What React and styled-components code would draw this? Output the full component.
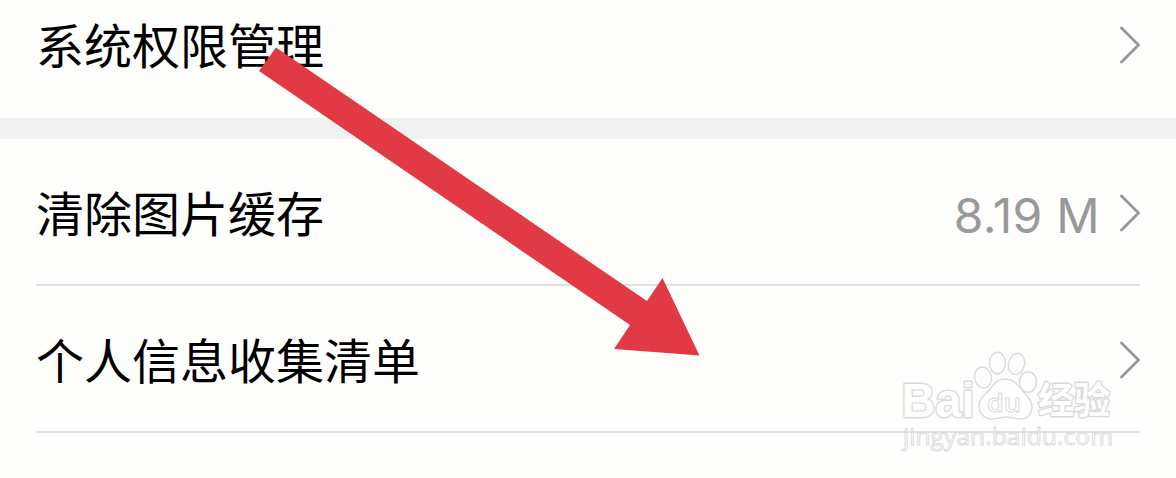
import React from 'react'
import styled, { createGlobalStyle } from 'styled-components'

const GlobalStyle = createGlobalStyle`
  body {
    margin: 0;
    background-color: #fefefd;
    overflow: hidden;
  }
`

const Page = styled.main`
  position: relative;
  width: 1176px;
  height: 478px;
  overflow: hidden;
  background-color: #fefefd;
  font-family: 'Noto Sans CJK SC', sans-serif;
`

const Group = styled.section`
  display: flex;
  flex-direction: column;
  padding: 0 36px;
`

const Divider = styled.div`
  height: 21px;
  background-color: #f1f1f1;
`

const Row = styled.div`
  display: flex;
  align-items: center;
  box-sizing: border-box;
  height: ${props => props.height || '147px'};
  padding-bottom: ${props => props.bottom || '0'};
  border-bottom: ${props => (props.line ? '2px solid #e1e1e1' : 'none')};
`

const Label = styled.span`
  flex: 1;
  padding-bottom: 1px;
  font-size: 48px;
  line-height: 60px;
  color: #000;
`

const Value = styled.span`
  margin-right: 18px;
  padding-top: 8px;
  font-family: Inter, sans-serif;
  font-size: 48px;
  line-height: 60px;
  letter-spacing: 0.3px;
  color: #999;
`

const ChevronIcon = styled.svg`
  width: 22px;
  height: 40px;
  margin-top: 2px;
  fill: none;
  stroke: #999;
  stroke-width: 2.8;
  stroke-linecap: round;
`

const Arrow = styled.svg`
  position: absolute;
  top: 0;
  left: 0;
  fill: #e23a45;
`

const Mark = styled.svg`
  position: absolute;
  left: 890px;
  top: 340px;
  fill: #fefefd;
  stroke: #dadada;
  stroke-width: 1.4;
  stroke-linejoin: round;
`

const MarkName = styled.text`
  font-family: 'Liberation Sans', 'Noto Sans CJK SC', sans-serif;
  font-weight: bold;
  paint-order: stroke;
  stroke-width: 2.8;
`

const MarkText = styled.text`
  font-family: 'Open Sans', sans-serif;
  fill: #fefefd;
  fill-opacity: 0.6;
  stroke-width: 0.9;
`

function Chevron () {
  return (
    <ChevronIcon viewBox='0 0 22 40'>
      <path d='M3.5 3 L20.5 20 L3.5 37' />
    </ChevronIcon>
  )
}

function Watermark () {
  return (
    <Mark width='240' height='130' viewBox='0 0 240 130'>
      <MarkName x='11.5' y='77' fontSize='49' textLength='73' lengthAdjust='spacingAndGlyphs'>Bai</MarkName>
      <ellipse cx='93' cy='37.5' rx='8.5' ry='10.5' transform='rotate(-10 93 37.5)' />
      <ellipse cx='107.5' cy='23' rx='8' ry='10.7' />
      <ellipse cx='126.5' cy='24' rx='8' ry='10.7' transform='rotate(12 126.5 24)' />
      <ellipse cx='138' cy='42' rx='8.5' ry='10.3' />
      <path d='M115 39 C107 39 104 44 100 49 C95 55 89 58 89 66 C89 74 95 79 102 79 C108 79 111 77 116 77 C121 77 125 79 131 79 C138 79 142 73 142 67 C142 60 137 56 132 50 C127 44 123 39 115 39 Z' />
      <MarkText x='97' y='72' fontSize='26' fontWeight='600' textLength='34' lengthAdjust='spacingAndGlyphs'>du</MarkText>
      <MarkName x='148' y='74' fontSize='37' textLength='72' lengthAdjust='spacingAndGlyphs'>经验</MarkName>
      <MarkText x='13' y='104.5' fontSize='24' textLength='210' lengthAdjust='spacingAndGlyphs'>jingyan.baidu.com</MarkText>
    </Mark>
  )
}

function App () {
  return (
    <Page>
      <GlobalStyle />
      <Group>
        <Row height='118px' bottom='31px'>
          <Label>系统权限管理</Label>
          <Chevron />
        </Row>
      </Group>
      <Divider />
      <Group>
        <Row line>
          <Label>清除图片缓存</Label>
          <Value>8.19 M</Value>
          <Chevron />
        </Row>
        <Row line>
          <Label>个人信息收集清单</Label>
          <Chevron />
        </Row>
      </Group>
      <Watermark />
      <Arrow width='1176' height='478' viewBox='0 0 1176 478'>
        <path d='M276 47.5 L647 301 L662.5 278 L699.5 355.5 L614 349 L630 325 L259 71 Z' />
      </Arrow>
    </Page>
  )
}

export default App
